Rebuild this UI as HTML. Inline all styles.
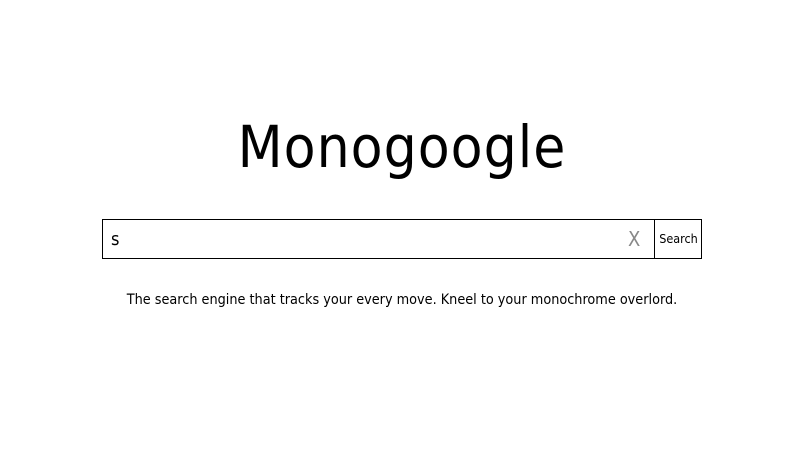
<!DOCTYPE html>
<html><head><style>
html,body{margin:0;padding:0;background:#fff;width:804px;height:452px;overflow:hidden;font-family:"DejaVu Sans Condensed","Liberation Sans",sans-serif;color:#000}
.t{position:absolute;left:0;width:804px;top:113px;text-align:center;font-size:58px;line-height:68px;letter-spacing:1px}
.box{position:absolute;left:102px;top:219px;width:598px;height:38px;border:1px solid #000}
.s{position:absolute;left:8px;top:9px;font-size:18px}
.x{position:absolute;left:525px;top:7px;font-size:20px;color:#888}
.btn{position:absolute;left:551px;top:0;width:47px;height:38px;border-left:1px solid #000;font-size:12.5px;line-height:38px;text-align:center}
.tag{position:absolute;left:0;width:804px;top:292px;text-align:center;font-size:14.3px}
</style></head><body>
<div class="t">Monogoogle</div>
<div class="box"><span class="s">s</span><span class="x">X</span><div class="btn">Search</div></div>
<div class="tag">The search engine that tracks your every move. Kneel to your monochrome overlord.</div>
</body></html>
